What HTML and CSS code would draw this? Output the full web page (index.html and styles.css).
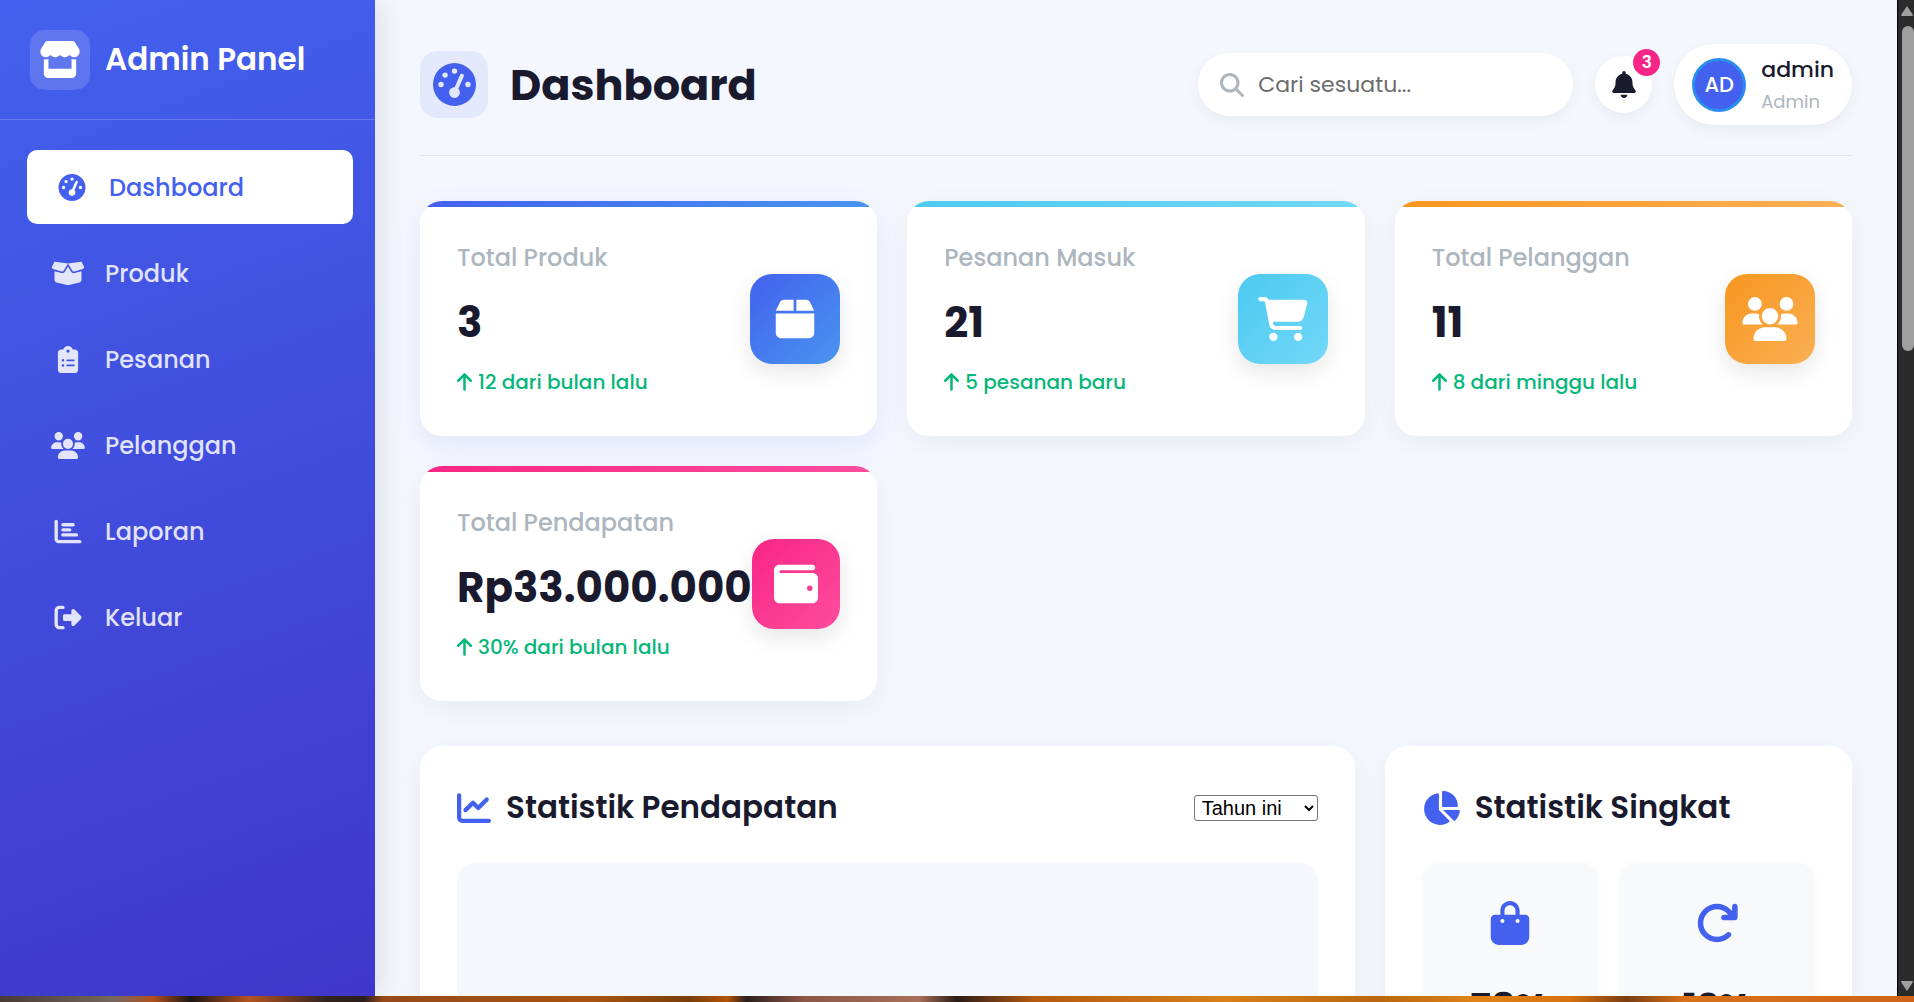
FILE: index.html
```html
<!DOCTYPE html>
<html lang="id">
<head>
  <meta charset="UTF-8" />
  <meta name="viewport" content="width=device-width, initial-scale=1.0"/>
  <title>Admin Panel</title>
  <link rel="stylesheet" href="styles.css">
</head>
<body>
  <svg class="sprite" aria-hidden="true">
    <symbol id="i-store" viewBox="0 0 576 512"><path d="M547.6 103.8L490.3 13.1C485.2 5 476.1 0 466.4 0H109.6C99.9 0 90.8 5 85.7 13.1L28.3 103.8c-29.6 46.8-3.4 111.9 51.9 119.4c4 .5 8.1 .8 12.1 .8c26.1 0 49.3-11.4 65.2-29c15.9 17.6 39.1 29 65.2 29c26.1 0 49.3-11.4 65.2-29c15.9 17.6 39.1 29 65.2 29c26.2 0 49.3-11.4 65.2-29c16 17.6 39.1 29 65.2 29c4.1 0 8.1-.3 12.1-.8c55.5-7.4 81.8-72.5 52.1-119.4zM499.7 254.9l-.1 0c-5.3 .7-10.7 1.1-16.2 1.1c-12.4 0-24.3-1.9-35.4-5.3V384H128V250.6c-11.2 3.5-23.2 5.4-35.6 5.4c-5.5 0-11-.4-16.3-1.1l-.1 0c-4.1-.6-8.1-1.3-12-2.3V384v64c0 35.3 28.7 64 64 64H448c35.3 0 64-28.7 64-64V384 252.6c-4 1-8 1.8-12.3 2.3z"/></symbol>
    <symbol id="i-gauge" viewBox="0 0 512 512"><path d="M0 256a256 256 0 1 1 512 0A256 256 0 1 1 0 256zM288 96a32 32 0 1 0 -64 0 32 32 0 1 0 64 0zM256 416c35.3 0 64-28.7 64-64c0-17.4-6.9-33.1-18.1-44.6L366 161.7c5.3-12.1-.2-26.3-12.3-31.6s-26.3 .2-31.6 12.3L257.9 288c-.6 0-1.3 0-1.9 0c-35.3 0-64 28.7-64 64s28.7 64 64 64zM176 144a32 32 0 1 0 -64 0 32 32 0 1 0 64 0zM96 288a32 32 0 1 0 0-64 32 32 0 1 0 0 64zm352-32a32 32 0 1 0 -64 0 32 32 0 1 0 64 0z"/></symbol>
    <symbol id="i-box-open" viewBox="0 0 640 512"><path d="M58.9 42.1c3-6.1 9.6-9.6 16.3-8.7L320 64 564.8 33.4c6.7-.8 13.3 2.7 16.3 8.7l41.7 83.4c9 17.9-.6 39.6-19.8 45.1L439.6 217.3c-13.9 4-28.8-1.9-36.2-14.3L320 64 236.6 203c-7.4 12.4-22.3 18.3-36.2 14.3L37.1 170.6c-19.3-5.5-28.8-27.2-19.8-45.1L58.9 42.1zM321.1 128l54.9 91.4c14.9 24.8 44.6 36.6 72.5 28.6L576 211.6v167c0 22-15 41.2-36.4 46.6l-204.1 51c-10.2 2.6-20.9 2.6-31 0l-204.1-51C79 419.7 64 400.5 64 378.5v-167L191.6 248c27.8 8 57.6-3.8 72.5-28.6L318.9 128h2.2z"/></symbol>
    <symbol id="i-clipboard" viewBox="0 0 384 512"><path d="M192 0c-41.8 0-77.4 26.7-90.5 64H64C28.7 64 0 92.7 0 128V448c0 35.3 28.7 64 64 64H320c35.3 0 64-28.7 64-64V128c0-35.3-28.7-64-64-64H282.5C269.4 26.7 233.8 0 192 0zm0 64a32 32 0 1 1 0 64 32 32 0 1 1 0-64zM72 272a24 24 0 1 1 48 0 24 24 0 1 1 -48 0zm104-16H304c8.8 0 16 7.2 16 16s-7.2 16-16 16H176c-8.8 0-16-7.2-16-16s7.2-16 16-16zM72 368a24 24 0 1 1 48 0 24 24 0 1 1 -48 0zm88 0c0-8.8 7.2-16 16-16H304c8.8 0 16 7.2 16 16s-7.2 16-16 16H176c-8.8 0-16-7.2-16-16z"/></symbol>
    <symbol id="i-users" viewBox="0 0 640 512"><path d="M144 0a80 80 0 1 1 0 160A80 80 0 1 1 144 0zM512 0a80 80 0 1 1 0 160A80 80 0 1 1 512 0zM0 298.7C0 239.8 47.8 192 106.7 192h42.7c15.9 0 31 3.5 44.6 9.7c-1.3 7.2-1.9 14.7-1.9 22.3c0 38.2 16.8 72.5 43.3 96c-.2 0-.4 0-.7 0H21.3C9.6 320 0 310.4 0 298.7zM405.3 320c-.2 0-.4 0-.7 0c26.6-23.5 43.3-57.8 43.3-96c0-7.6-.7-15-1.9-22.3c13.6-6.3 28.7-9.7 44.6-9.7h42.7C592.2 192 640 239.8 640 298.7c0 11.8-9.6 21.3-21.3 21.3H405.3zM224 224a96 96 0 1 1 192 0 96 96 0 1 1 -192 0zM128 485.3C128 411.7 187.7 352 261.3 352H378.7C452.3 352 512 411.7 512 485.3c0 14.7-11.9 26.7-26.7 26.7H154.7c-14.7 0-26.7-11.9-26.7-26.7z"/></symbol>
    <symbol id="i-chart-bar" viewBox="0 0 512 512"><path d="M32 32c17.7 0 32 14.3 32 32V400c0 8.8 7.2 16 16 16H480c17.7 0 32 14.3 32 32s-14.3 32-32 32H80c-44.2 0-80-35.8-80-80V64C0 46.3 14.3 32 32 32zm96 96c0-17.7 14.3-32 32-32l192 0c17.7 0 32 14.3 32 32s-14.3 32-32 32l-192 0c-17.7 0-32-14.3-32-32zm32 64H288c17.7 0 32 14.3 32 32s-14.3 32-32 32H160c-17.7 0-32-14.3-32-32s14.3-32 32-32zm0 96H416c17.7 0 32 14.3 32 32s-14.3 32-32 32H160c-17.7 0-32-14.3-32-32s14.3-32 32-32z"/></symbol>
    <symbol id="i-logout" viewBox="0 0 512 512"><path d="M377.9 105.9L500.7 228.7c7.2 7.2 11.3 17.1 11.3 27.3s-4.1 20.1-11.3 27.3L377.9 406.1c-6.4 6.4-15 9.9-24 9.9c-18.7 0-33.9-15.2-33.9-33.9l0-62.1-128 0c-17.7 0-32-14.3-32-32l0-64c0-17.7 14.3-32 32-32l128 0 0-62.1c0-18.7 15.2-33.9 33.9-33.9c9 0 17.6 3.6 24 9.9zM160 96L96 96c-17.7 0-32 14.3-32 32l0 256c0 17.7 14.3 32 32 32l64 0c17.7 0 32 14.3 32 32s-14.3 32-32 32l-64 0c-53 0-96-43-96-96L0 128C0 75 43 32 96 32l64 0c17.7 0 32 14.3 32 32s-14.3 32-32 32z"/></symbol>
    <symbol id="i-search" viewBox="0 0 512 512"><path d="M416 208c0 45.9-14.9 88.3-40 122.7L502.6 457.4c12.5 12.5 12.5 32.8 0 45.3s-32.8 12.5-45.3 0L330.7 376c-34.4 25.2-76.8 40-122.7 40C93.1 416 0 322.9 0 208S93.1 0 208 0S416 93.1 416 208zM208 352a144 144 0 1 0 0-288 144 144 0 1 0 0 288z"/></symbol>
    <symbol id="i-bell" viewBox="0 0 448 512"><path d="M224 0c-17.7 0-32 14.3-32 32V51.2C119 66 64 130.6 64 208v18.8c0 47-17.3 92.4-48.5 127.6l-7.4 8.3c-8.4 9.4-10.4 22.9-5.3 34.4S19.4 416 32 416H416c12.6 0 24-7.4 29.2-18.9s3.1-25-5.3-34.4l-7.4-8.3C401.3 319.2 384 273.9 384 226.8V208c0-77.4-55-142-128-156.8V32c0-17.7-14.3-32-32-32zm45.3 493.3c12-12 18.7-28.3 18.7-45.3H224 160c0 17 6.7 33.3 18.7 45.3s28.3 18.7 45.3 18.7s33.3-6.7 45.3-18.7z"/></symbol>
    <symbol id="i-box" viewBox="0 0 448 512"><path d="M50.7 58.5L0 160H208V32H93.7C75.5 32 58.9 42.3 50.7 58.5zM240 160H448L397.3 58.5C389.1 42.3 372.5 32 354.3 32H240V160zm208 32H0V416c0 35.3 28.7 64 64 64H384c35.3 0 64-28.7 64-64V192z"/></symbol>
    <symbol id="i-cart" viewBox="0 0 576 512"><path d="M0 24C0 10.7 10.7 0 24 0H69.5c22 0 41.5 12.8 50.6 32h411c26.3 0 45.5 25 38.6 50.4l-41 152.3c-8.5 31.4-37 53.3-69.5 53.3H170.7l5.4 28.5c2.2 11.3 12.1 19.5 23.6 19.5H488c13.3 0 24 10.7 24 24s-10.7 24-24 24H199.7c-34.6 0-64.3-24.6-70.7-58.5L77.4 54.5c-.7-3.8-4-6.5-7.9-6.5H24C10.7 48 0 37.3 0 24zM128 464a48 48 0 1 1 96 0 48 48 0 1 1 -96 0zm336-48a48 48 0 1 1 0 96 48 48 0 1 1 0-96z"/></symbol>
    <symbol id="i-wallet" viewBox="0 0 512 512"><path d="M64 32C28.7 32 0 60.7 0 96V416c0 35.3 28.7 64 64 64H448c35.3 0 64-28.7 64-64V192c0-35.3-28.7-64-64-64H80c-8.8 0-16-7.2-16-16s7.2-16 16-16H448c17.7 0 32-14.3 32-32s-14.3-32-32-32H64zM416 272a32 32 0 1 1 0 64 32 32 0 1 1 0-64z"/></symbol>
    <symbol id="i-arrow-up" viewBox="0 0 384 512"><path d="M214.6 41.4c-12.5-12.5-32.8-12.5-45.3 0l-160 160c-12.5 12.5-12.5 32.8 0 45.3s32.8 12.5 45.3 0L160 141.2V448c0 17.7 14.3 32 32 32s32-14.3 32-32V141.2L329.4 246.6c12.5 12.5 32.8 12.5 45.3 0s12.5-32.8 0-45.3l-160-160z"/></symbol>
    <symbol id="i-chart-line" viewBox="0 0 512 512"><path d="M64 64c0-17.7-14.3-32-32-32S0 46.3 0 64V400c0 44.2 35.8 80 80 80H480c17.7 0 32-14.3 32-32s-14.3-32-32-32H80c-8.8 0-16-7.2-16-16V64zm406.6 86.6c12.5-12.5 12.5-32.8 0-45.3s-32.8-12.5-45.3 0L320 210.7l-57.4-57.4c-12.5-12.5-32.8-12.5-45.3 0l-112 112c-12.5 12.5-12.5 32.8 0 45.3s32.8 12.5 45.3 0L240 221.3l57.4 57.4c12.5 12.5 32.8 12.5 45.3 0l128-128z"/></symbol>
    <symbol id="i-chart-pie" viewBox="0 0 576 512"><path d="M304 240V16.6c0-9 7-16.6 16-16.6C443.7 0 544 100.3 544 224c0 9-7.6 16-16.6 16H304zM32 272C32 150.7 122.1 50.3 239 34.3c9.2-1.3 17 6.1 17 15.4V288L412.5 444.5c6.7 6.7 6.2 17.7-1.5 23.1C371.8 495.6 323.8 512 272 512C139.5 512 32 404.6 32 272zm526.4 16c9.3 0 16.6 7.8 15.4 17c-7.7 55.9-34.6 105.6-73.9 142.3c-6 5.6-15.4 5.2-21.2-.7L320 288H558.4z"/></symbol>
    <symbol id="i-bag" viewBox="0 0 448 512"><path d="M160 112c0-35.3 28.7-64 64-64s64 28.7 64 64v48H160V112zm-48 48H48c-26.5 0-48 21.5-48 48V416c0 53 43 96 96 96H352c53 0 96-43 96-96V208c0-26.5-21.5-48-48-48H336V112C336 50.1 285.9 0 224 0S112 50.1 112 112v48zm24 48a24 24 0 1 1 0 48 24 24 0 1 1 0-48zm152 24a24 24 0 1 1 48 0 24 24 0 1 1 -48 0z"/></symbol>
    <symbol id="i-redo" viewBox="0 0 512 512"><path d="M386.3 160H336c-17.7 0-32 14.3-32 32s14.3 32 32 32H464c17.7 0 32-14.3 32-32V64c0-17.7-14.3-32-32-32s-32 14.3-32 32v51.2L414.4 97.6c-87.5-87.5-229.3-87.5-316.8 0s-87.5 229.3 0 316.8s229.3 87.5 316.8 0c12.5-12.5 12.5-32.8 0-45.3s-32.8-12.5-45.3 0c-62.5 62.5-163.8 62.5-226.3 0s-62.5-163.8 0-226.3s163.8-62.5 226.3 0L386.3 160z"/></symbol>
  </svg>

  <div class="window">
    <aside class="sidebar">
      <div class="brand">
        <span class="brand-icon"><svg><use href="#i-store"/></svg></span>
        <span class="brand-name">Admin Panel</span>
      </div>
      <nav class="menu">
        <a class="active" href="#"><svg><use href="#i-gauge"/></svg>Dashboard</a>
        <a href="#"><svg><use href="#i-box-open"/></svg>Produk</a>
        <a href="#"><svg><use href="#i-clipboard"/></svg>Pesanan</a>
        <a href="#"><svg><use href="#i-users"/></svg>Pelanggan</a>
        <a href="#"><svg><use href="#i-chart-bar"/></svg>Laporan</a>
        <a href="#"><svg><use href="#i-logout"/></svg>Keluar</a>
      </nav>
    </aside>

    <main class="main">
      <header class="header">
        <div class="page-title">
          <span class="title-icon"><svg><use href="#i-gauge"/></svg></span>
          <h1>Dashboard</h1>
        </div>
        <div class="header-right">
          <label class="search">
            <svg><use href="#i-search"/></svg>
            <input type="text" placeholder="Cari sesuatu..." aria-label="Cari" />
          </label>
          <button class="bell" type="button" aria-label="Notifikasi">
            <svg><use href="#i-bell"/></svg>
            <span class="badge">3</span>
          </button>
          <div class="user">
            <span class="avatar">AD</span>
            <div>
              <div class="user-name">admin</div>
              <div class="user-role">Admin</div>
            </div>
          </div>
        </div>
      </header>

      <section class="stats">
        <div class="stat blue">
          <div class="stat-info">
            <h3>Total Produk</h3>
            <div class="value">3</div>
            <div class="trend"><svg><use href="#i-arrow-up"/></svg>12 dari bulan lalu</div>
          </div>
          <span class="stat-icon"><svg><use href="#i-box"/></svg></span>
        </div>
        <div class="stat cyan">
          <div class="stat-info">
            <h3>Pesanan Masuk</h3>
            <div class="value">21</div>
            <div class="trend"><svg><use href="#i-arrow-up"/></svg>5 pesanan baru</div>
          </div>
          <span class="stat-icon"><svg><use href="#i-cart"/></svg></span>
        </div>
        <div class="stat orange">
          <div class="stat-info">
            <h3>Total Pelanggan</h3>
            <div class="value">11</div>
            <div class="trend"><svg><use href="#i-arrow-up"/></svg>8 dari minggu lalu</div>
          </div>
          <span class="stat-icon"><svg><use href="#i-users"/></svg></span>
        </div>
        <div class="stat pink">
          <div class="stat-info">
            <h3>Total Pendapatan</h3>
            <div class="value">Rp33.000.000</div>
            <div class="trend"><svg><use href="#i-arrow-up"/></svg>30% dari bulan lalu</div>
          </div>
          <span class="stat-icon"><svg><use href="#i-wallet"/></svg></span>
        </div>
      </section>

      <section class="panels">
        <div class="panel">
          <div class="panel-head">
            <h2><svg><use href="#i-chart-line"/></svg>Statistik Pendapatan</h2>
            <select aria-label="Periode">
              <option>Tahun ini</option>
            </select>
          </div>
          <div class="chart"></div>
        </div>
        <div class="panel">
          <div class="panel-head">
            <h2><svg class="wide"><use href="#i-chart-pie"/></svg>Statistik Singkat</h2>
          </div>
          <div class="quick">
            <div class="quick-card">
              <svg><use href="#i-bag"/></svg>
              <div class="quick-value">78%</div>
            </div>
            <div class="quick-card">
              <svg><use href="#i-redo"/></svg>
              <div class="quick-value">12%</div>
            </div>
          </div>
        </div>
      </section>
    </main>

    <div class="scrollbar">
      <svg viewBox="0 0 14 10"><path d="M7 0L13 9Q13 10 12 10H2Q1 10 1 9z"/></svg>
      <div class="track"><div class="thumb"></div></div>
      <svg viewBox="0 0 14 10"><path d="M7 10L1 1Q1 0 2 0H12Q13 0 13 1z"/></svg>
    </div>
  </div>
  <div class="wallpaper"></div>
</body>
</html>
```
FILE: styles.css
```css
* {
  box-sizing: border-box;
  margin: 0;
  padding: 0;
}
body {
  font-family: Poppins, Inter, "Open Sans", sans-serif;
  background: #f4f7fe;
  color: #1a1a2e;
  height: 100vh;
  overflow: hidden;
  display: flex;
  flex-direction: column;
}
svg {
  fill: currentColor;
  flex-shrink: 0;
}
.sprite {
  display: none;
}
.window {
  flex: 1;
  min-height: 0;
  display: flex;
  overflow: hidden;
}

/* sidebar */
.sidebar {
  width: 375px;
  flex-shrink: 0;
  background: linear-gradient(160deg, #4361ee, #3f37c9);
  color: #fff;
  box-shadow: 5px 0 25px rgba(0, 0, 0, 0.1);
  z-index: 1;
}
.brand {
  height: 120px;
  padding: 0 30px;
  display: flex;
  align-items: center;
  gap: 15px;
  border-bottom: 1px solid rgba(255, 255, 255, 0.2);
}
.brand-icon {
  width: 60px;
  height: 60px;
  border-radius: 15px;
  background: rgba(255, 255, 255, 0.15);
  display: flex;
  align-items: center;
  justify-content: center;
}
.brand-icon svg {
  width: 42px;
  height: 37px;
}
.brand-name {
  font-size: 31px;
  font-weight: 600;
}
.menu {
  padding: 30px 22px 0 27px;
  display: flex;
  flex-direction: column;
  gap: 12px;
}
.menu a {
  height: 74px;
  padding-left: 24px;
  border-radius: 10px;
  display: flex;
  align-items: center;
  gap: 20px;
  color: rgba(255, 255, 255, 0.85);
  font-size: 24px;
  font-weight: 500;
  text-decoration: none;
}
.menu svg {
  width: 34px;
  height: 27px;
}
.menu .active {
  background: #fff;
  color: #4361ee;
  padding-left: 28px;
}

/* header */
.main {
  flex: 1;
  min-width: 0;
  padding: 44px 45px 0;
}
.header {
  display: flex;
  align-items: center;
  justify-content: space-between;
  padding-bottom: 30px;
  margin-bottom: 45px;
  border-bottom: 1px solid #e2e8f0;
}
.page-title, .header-right {
  display: flex;
  align-items: center;
  gap: 22px;
}
.title-icon {
  width: 68px;
  height: 67px;
  border-radius: 18px;
  background: #e3e8fc;
  color: #4361ee;
  display: flex;
  align-items: center;
  justify-content: center;
}
.title-icon svg {
  width: 43px;
  height: 43px;
}
h1 {
  font-size: 43px;
  font-weight: 700;
}
.search, .bell, .user {
  background: #fff;
  box-shadow: 0 5px 15px rgba(0, 0, 0, 0.05);
}
.search {
  width: 375px;
  height: 63px;
  padding: 0 22px;
  border-radius: 32px;
  display: flex;
  align-items: center;
  gap: 14px;
}
.search svg {
  width: 24px;
  height: 24px;
  color: #adb5bd;
}
.search input {
  flex: 1;
  min-width: 0;
  border: none;
  outline: none;
  background: none;
  font-family: inherit;
  font-size: 22px;
}
.search input::placeholder {
  color: #6c6c6c;
}
.bell {
  position: relative;
  width: 57px;
  height: 57px;
  border: none;
  border-radius: 50%;
  color: #1a1a2e;
  display: flex;
  align-items: center;
  justify-content: center;
}
.bell svg {
  width: 24px;
  height: 27px;
}
.badge {
  position: absolute;
  top: -7px;
  right: -8px;
  width: 27px;
  height: 27px;
  border-radius: 50%;
  background: #f72585;
  color: #fff;
  font-family: Poppins, Inter, sans-serif;
  font-size: 17px;
  font-weight: 600;
  line-height: 27px;
  text-align: center;
}
.user {
  height: 81px;
  padding: 0 18px;
  border-radius: 41px;
  display: flex;
  align-items: center;
  gap: 15px;
}
.avatar {
  width: 54px;
  height: 54px;
  border: 3px solid #2b8cf0;
  border-radius: 50%;
  background: #4361ee;
  color: #fff;
  font-size: 21px;
  font-weight: 500;
  line-height: 48px;
  text-align: center;
}
.user-name {
  font-size: 22px;
  font-weight: 500;
  line-height: 34px;
}
.user-role {
  font-size: 18px;
  line-height: 30px;
  color: #adb5bd;
}

/* stat cards */
.stats {
  display: grid;
  grid-template-columns: repeat(3, 1fr);
  gap: 30px;
  margin-bottom: 45px;
}
.stat {
  position: relative;
  height: 235px;
  padding: 0 37px;
  border-radius: 22px;
  background: #fff;
  box-shadow: 0 8px 30px rgba(0, 0, 0, 0.05);
  overflow: hidden;
  display: flex;
  align-items: center;
  justify-content: space-between;
}
.stat::before {
  content: "";
  position: absolute;
  top: 0;
  left: 0;
  right: 0;
  height: 6px;
}
.blue::before, .blue .stat-icon {
  background: linear-gradient(135deg, #4361ee, #4895ef);
}
.cyan::before, .cyan .stat-icon {
  background: linear-gradient(135deg, #4cc9f0, #72d8f7);
}
.orange::before, .orange .stat-icon {
  background: linear-gradient(135deg, #f8961e, #f9b055);
}
.pink::before, .pink .stat-icon {
  background: linear-gradient(135deg, #f72585, #ff4d9e);
}
.blue {
  box-shadow: 0 10px 30px rgba(67, 97, 238, 0.1);
}
h3 {
  font-size: 24px;
  font-weight: 500;
  line-height: 38px;
  color: #adb5bd;
}
.value {
  margin: 13px 0 10px;
  font-size: 42px;
  font-weight: 700;
  line-height: 66px;
}
.trend {
  display: flex;
  align-items: center;
  gap: 6px;
  color: #06b67a;
  font-size: 20px;
  font-weight: 500;
  line-height: 33px;
}
.trend svg {
  width: 15px;
  height: 20px;
}
.stat-icon {
  width: 90px;
  height: 90px;
  border-radius: 22px;
  box-shadow: 0 8px 22px rgba(0, 0, 0, 0.1);
  color: #fff;
  display: flex;
  align-items: center;
  justify-content: center;
}
.stat-icon svg {
  width: 56px;
  height: 44px;
}

/* panels */
.panels {
  display: grid;
  grid-template-columns: 2fr 1fr;
  gap: 30px;
}
.panel {
  min-width: 0;
  height: 560px;
  padding: 38px 37px;
  border-radius: 22px;
  background: #fff;
  box-shadow: 0 8px 30px rgba(0, 0, 0, 0.05);
}
.panel-head {
  display: flex;
  align-items: center;
  justify-content: space-between;
  margin-bottom: 32px;
}
h2 {
  display: flex;
  align-items: center;
  gap: 15px;
  font-size: 31px;
  font-weight: 600;
  line-height: 47px;
}
h2 svg {
  width: 34px;
  height: 34px;
  color: #4361ee;
}
h2 .wide {
  width: 38px;
}
select {
  width: 124px;
  height: 26px;
  padding: 0 3px;
  border: 1px solid #767676;
  border-radius: 3px;
  background: #fff;
  color: #000;
  font-family: Arial, "Liberation Sans", sans-serif;
  font-size: 20px;
}
.chart {
  height: 375px;
  border-radius: 18px;
  background: #f4f7fe;
}
.quick {
  display: grid;
  grid-template-columns: 9fr 10fr;
  gap: 22px;
}
.quick-card {
  height: 220px;
  padding-top: 38px;
  border-radius: 18px;
  background: #f8f9fa;
  box-shadow: 0 0 6px rgba(0, 0, 0, 0.03);
  text-align: center;
}
.quick-card svg {
  display: block;
  width: 44px;
  height: 44px;
  margin: 0 auto 34px;
  color: #4361ee;
}
.quick-value {
  font-size: 38px;
  font-weight: 700;
  line-height: 57px;
}

/* scrollbar and the strip under the window */
.scrollbar {
  width: 17px;
  flex-shrink: 0;
  padding: 6px 0 5px 2px;
  background: #2b2b2b;
  border-left: 1px solid #000;
  color: #9f9f9f;
  display: flex;
  flex-direction: column;
}
.scrollbar svg {
  width: 14px;
  height: 10px;
}
.track {
  flex: 1;
  padding: 10px 0 0 2px;
}
.thumb {
  height: 34%;
  border-radius: 6px;
  background: #9f9f9f;
}
.wallpaper {
  height: 6px;
  background: linear-gradient(90deg, #4a3a36 0, #75665f 6%, #b0501c 8%, #1c1612 10%, #b55420 13%, #33231f 17%, #2b1d1a 19%, #96491a 20%, #a85410 31%, #7a3e0a 36%, #b35305 38%, #2b1f1d 39%, #8d5648 42%, #a87058 48%, #2b1b17 50%, #b55a10 54%, #d9801a 64%, #b8660f 72%, #e08318 77%, #d9720f 82%, #7a3d12 85%, #d9721b 88%, #cf6418 100%);
}
```
